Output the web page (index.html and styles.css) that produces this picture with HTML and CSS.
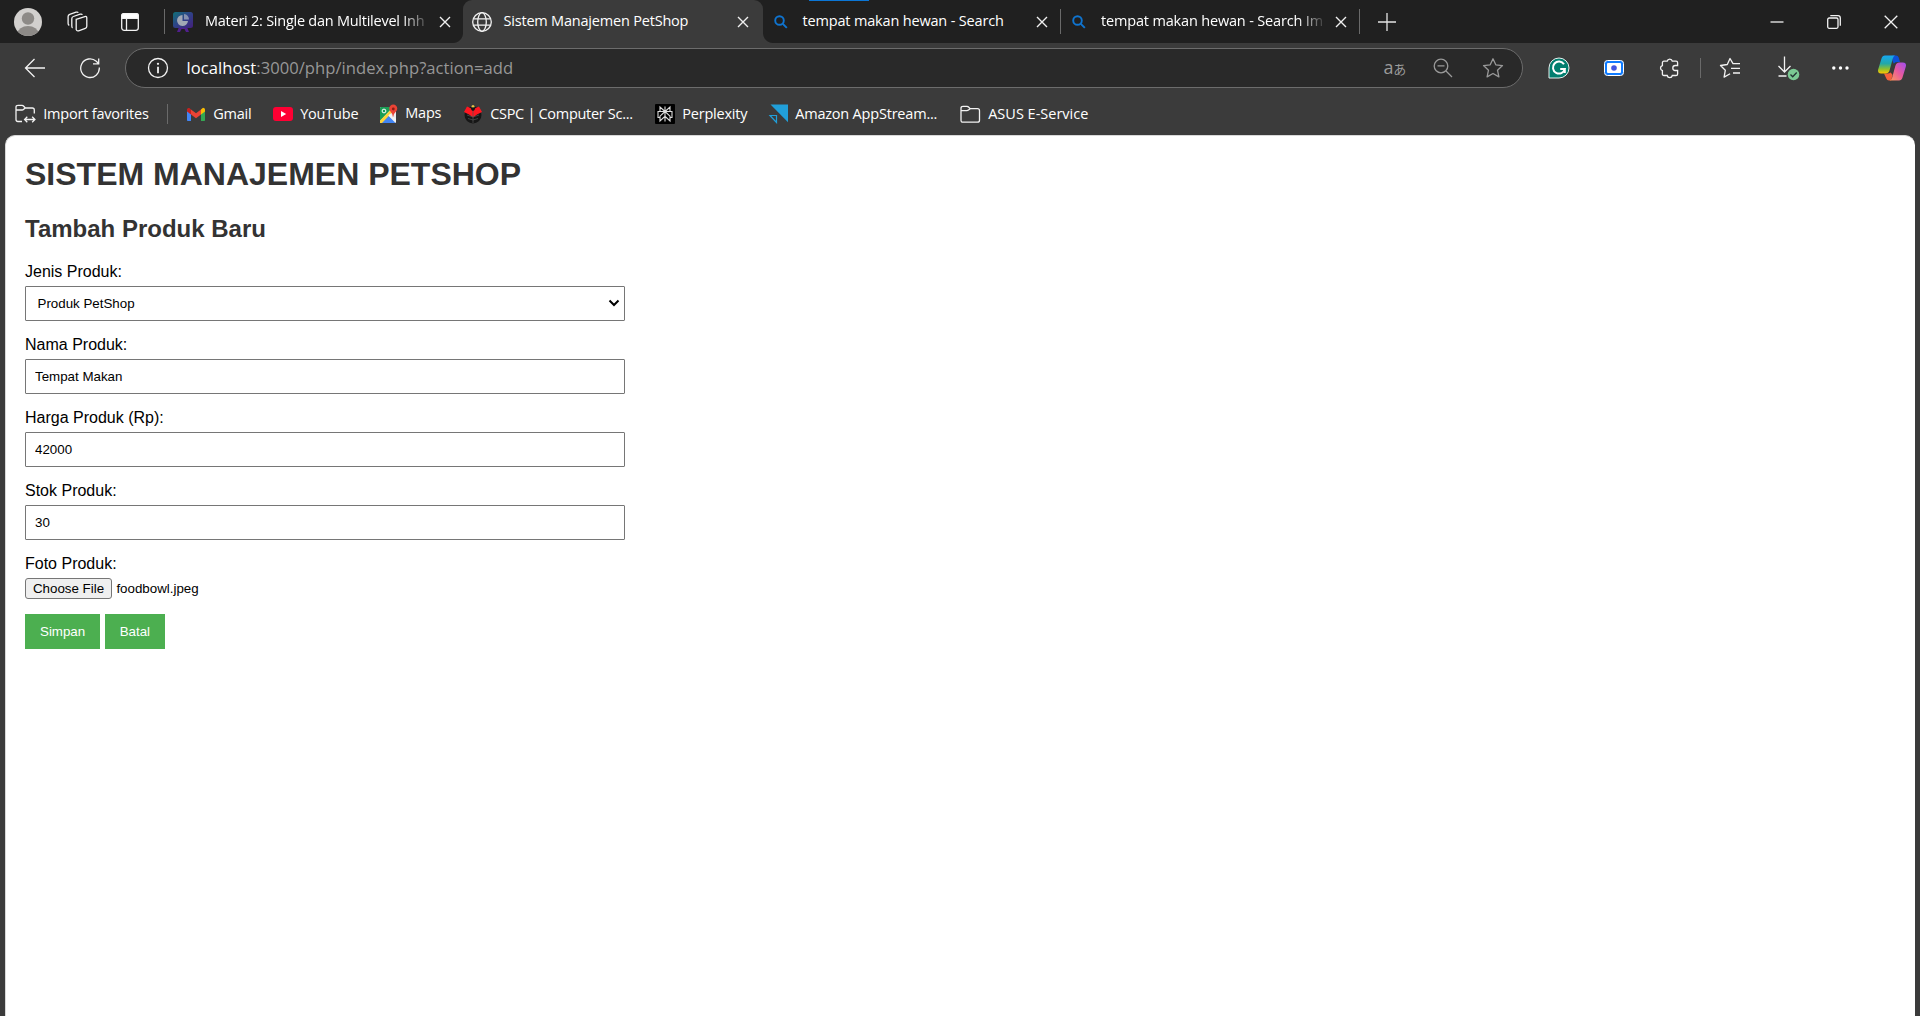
FILE: index.html
```html
<!DOCTYPE html>
<html lang="id">
<head>
<meta charset="utf-8">
<title>Sistem Manajemen PetShop</title>
<link rel="stylesheet" href="styles.css">
</head>
<body>
<div class="browser">
  <header class="tabstrip">
    <svg class="avatar" width="28" height="28" viewBox="0 0 28 28"><defs><clipPath id="av"><circle cx="14" cy="14" r="14"/></clipPath></defs><g clip-path="url(#av)"><rect width="28" height="28" fill="#d2d0ce"/><circle cx="14" cy="10.5" r="6.2" fill="#8d8a87"/><ellipse cx="14" cy="25.5" rx="10.5" ry="7.5" fill="#8d8a87"/></g></svg>
    <svg class="line workspaces" width="24" height="24" viewBox="0 0 24 24"><path d="M10.2 9.3 18.8 6.6q2-.6 2 1.3v8.3q0 1.6-1.5 2.1l-6.700 2.500q-1.800.6-2.400-1.200Z"/><path d="M6.600 17.800q-.8-.4-.8-1.700V8.800q0-1.800 1.600-2.300l6.800-2.300q1.700-.5 2.100.7M3.300 15.400q-1.200-.6-1.200-2V6.600q0-1.700 1.600-2.300l6.400-2.100q1.600-.5 2.200.5"/></svg>
    <svg class="line panel" width="20" height="20" viewBox="0 0 20 20"><rect x="1.700" y="1.700" width="16.600" height="16.600" rx="2.500"/><path d="M1.700 3.500q0-1.800 1.800-1.800h13q1.800 0 1.800 1.800V6.300H1.700Z" fill="#fff"/><path d="M6.500 6v12"/></svg>
    <i class="divider"></i>
    <div class="tab tab-first">
      <svg class="fav" width="22" height="22" viewBox="0 0 22 22"><defs><linearGradient id="pg" x1="0" y1="0" x2="1" y2="1"><stop offset="0" stop-color="#0e7f86"/><stop offset=".5" stop-color="#33489b"/><stop offset="1" stop-color="#4a1f8c"/></linearGradient></defs><path d="M7 16 5 21h3l1.500-3h3l1.500 3h3l-2-5Z" fill="#5a1fa0"/><rect x="1" y="1" width="20" height="16" rx="2.500" fill="url(#pg)"/><path d="M10.500 4A5.500 5.500 0 1 0 16 10h-5.500Z" fill="#b9c0cf"/><path d="M12 3a5.500 5.500 0 0 1 5 5.500h-5Z" fill="#97a5c8"/></svg>
      <span class="tab-title fade">Materi 2: Single dan Multilevel Inh</span>
      <svg class="close" width="12" height="12" viewBox="0 0 12 12"><path d="m1 1 10 10M11 1 1 11"/></svg>
    </div>
    <div class="tab tab-active">
      <svg class="fav line" width="22" height="22" viewBox="0 0 22 22"><circle cx="11" cy="11" r="9.300"/><ellipse cx="11" cy="11" rx="4.300" ry="9.300"/><path d="M2.500 7.800h17M2.500 14.200h17"/></svg>
      <span class="tab-title">Sistem Manajemen PetShop</span>
      <svg class="close" width="12" height="12" viewBox="0 0 12 12"><path d="m1 1 10 10M11 1 1 11"/></svg>
    </div>
    <div class="tab tab-search">
      <b class="group-line"></b>
      <svg class="fav mag" width="14" height="14" viewBox="0 0 14 14"><circle cx="5.500" cy="5.500" r="4.300"/><path d="m8.800 8.800 4 4"/></svg>
      <span class="tab-title">tempat makan hewan - Search</span>
      <svg class="close" width="12" height="12" viewBox="0 0 12 12"><path d="m1 1 10 10M11 1 1 11"/></svg>
    </div>
    <i class="divider"></i>
    <div class="tab tab-search tab-last">
      <svg class="fav mag" width="14" height="14" viewBox="0 0 14 14"><circle cx="5.500" cy="5.500" r="4.300"/><path d="m8.800 8.800 4 4"/></svg>
      <span class="tab-title fade">tempat makan hewan - Search Im</span>
      <svg class="close" width="12" height="12" viewBox="0 0 12 12"><path d="m1 1 10 10M11 1 1 11"/></svg>
    </div>
    <i class="divider"></i>
    <svg class="newtab" width="18" height="18" viewBox="0 0 18 18"><path d="M9 0v18M0 9h18"/></svg>
    <div class="window">
      <svg class="line" width="14" height="14" viewBox="0 0 14 14"><path d="M.5 7h13"/></svg>
      <svg class="line" width="14" height="14" viewBox="0 0 14 14"><rect x=".7" y="3" width="10.300" height="10.300" rx="1.500"/><path d="M3.300.7h7.700q2.300 0 2.300 2.300v7.700"/></svg>
      <svg class="line" width="14" height="14" viewBox="0 0 14 14"><path d="m.7.700 12.600 12.600M13.300.700.7 13.300"/></svg>
    </div>
  </header>

  <nav class="toolbar">
    <svg class="line" width="22" height="22" viewBox="0 0 22 22"><path d="M21 11H1.500M10.500 2l-9 9 9 9"/></svg>
    <svg class="line" width="22" height="22" viewBox="0 0 22 22"><path d="M20.300 10.500a9.300 9.300 0 1 1-3-6.200L19.500 6.500M19.700 1.500V6.800H14"/></svg>
    <div class="address">
      <svg class="line info" width="22" height="22" viewBox="0 0 22 22"><circle cx="11" cy="11" r="9.500"/><path d="M11 9.800v6.400" stroke-width="1.800"/><circle cx="11" cy="6.800" r=".5"/></svg>
      <span class="url"><span class="host">localhost</span>:3000/php/index.php?action=add</span>
      <span class="translate"><span>a</span><span class="kana">あ</span></span>
      <svg class="dim zoomout" width="20" height="20" viewBox="0 0 20 20"><circle cx="8" cy="8" r="6.800"/><path d="m13 13 6 6M4.500 7.800h7"/></svg>
      <svg class="dim star" width="22" height="22" viewBox="0 0 22 22"><path d="m11 1.800 2.800 6 6.700.8-5 4.600 1.400 6.700-5.900-3.400-5.900 3.400 1.400-6.700-5-4.600 6.700-.8Z" stroke-linejoin="round"/></svg>
    </div>
    <svg class="grammarly" width="22" height="22" viewBox="0 0 22 22"><path d="M1 21V11A10 10 0 1 1 11 21Z" fill="#027e6f" stroke="#e6f2f0"/><path d="M16 7.300A6 6 0 1 0 16.800 12h-4.600M16.800 12v4" fill="none" stroke="#fff" stroke-width="2"/></svg>
    <svg class="recorder" width="22" height="22" viewBox="0 0 22 22"><rect x="1.500" y="3.500" width="19" height="15" rx="3" fill="#0f7bff" stroke="#fff"/><rect x="4" y="6" width="14" height="10" rx="1" fill="#fff"/><circle cx="11" cy="11" r="2.800" fill="#4356e0"/></svg>
    <svg class="line puzzle" width="22" height="22" viewBox="0 0 22 22"><path d="M6 4.200h3.200a2.600 2.600 0 0 1 5.100 0h3.700q1.600 0 1.600 1.600v2.700h-2.300a2.500 2.500 0 0 0 0 5h2.300v3.400q0 1.600-1.600 1.600h-3.700a2.600 2.600 0 0 1-5.100 0H6q-1.600 0-1.600-1.600v-3.400a2.600 2.600 0 0 1 0-5V5.800q0-1.600 1.600-1.600Z"/></svg>
    <i class="divider"></i>
    <svg class="line" width="22" height="22" viewBox="0 0 22 22"><path d="M21 6.600H14L11 1.500 8.300 7.500 1.500 8.500l4.800 4.800-1.200 6.800 6-3.300M12 11.300h9M14 16h7" stroke-linejoin="round"/></svg>
    <svg class="download" width="26" height="26" viewBox="0 0 26 26"><path class="line" d="M8.500 1.500v15M2.500 11l6 6 6-6M2.500 21h8"/><circle cx="17.500" cy="19.500" r="5.800" fill="#7bc993"/><path d="m14.500 19.500 2.200 2.200 4-4.200" fill="none" stroke="#233" stroke-width="1.300"/></svg>
    <svg class="dots" width="18" height="6" viewBox="0 0 18 6"><circle cx="1.800" cy="3" r="1.700"/><circle cx="8.500" cy="3" r="1.700"/><circle cx="15" cy="3" r="1.700"/></svg>
    <svg class="copilot" width="28" height="26" viewBox="0 0 28 26"><defs><linearGradient id="c1" x1="0" y1="0" x2="0" y2="1"><stop offset="0" stop-color="#16a7f2"/><stop offset=".45" stop-color="#22a8a8"/><stop offset=".75" stop-color="#8fc02d"/><stop offset="1" stop-color="#ffc400"/></linearGradient><linearGradient id="c2" x1="1" y1="0" x2="0" y2="1"><stop offset="0" stop-color="#a04cf0"/><stop offset=".5" stop-color="#e85a9e"/><stop offset="1" stop-color="#ff9a55"/></linearGradient></defs><path d="M14.500.5h3.500Q20 .5 20.700 2.500l1.300 4.500H19q-2 0-3 2L14.500 6Z" fill="#0d50d8"/><path d="M6 18.500h4q2.500 0 3.500-2l1 4-1.500 5H11q-2 0-2.700-2Z" fill="#f4603c"/><path d="M7 .5h10Q15.500 1 14.800 3.500L11.500 15.500q-.9 3-4 3H3q-4 0-2.700-4.500L3.500 3.500Q4.400.5 7 .5Z" fill="url(#c1)"/><path d="M21 25.500H11.500q2-.5 2.700-3L17.300 11q.9-3.500 4-3.500h3.700q4 0 2.700 4.500L24.500 22.500Q23.600 25.500 21 25.500Z" fill="url(#c2)"/><path d="M16.200 8.500Q17 7.500 18 7.500L14.200 19l-1.400-1Z" fill="#3b3b3b"/></svg>
  </nav>

  <nav class="bookmarks">
    <a class="mark"><svg class="line" width="21" height="20" viewBox="0 0 21 20"><path d="M19.300 9.500V6q0-2-2-2h-7L8.500 2Q8 1.300 7 1.300H3Q1 1.300 1 3.300V15.500q0 2 2 2H7M1 6H7q1 0 1.700-.7L10.300 4M10 15.500h9.500M12.300 12.800 9.600 15.500l2.700 2.700M17.200 12.800l2.700 2.700-2.700 2.700"/></svg><span>Import favorites</span></a>
    <i class="divider"></i>
    <a class="mark"><svg width="20" height="20" viewBox="0 0 20 20"><path d="M1 5v11.200q0 .8.800.8H5V8Z" fill="#4285f4"/><path d="M19 5v11.200q0 .8-.8.800H15V8Z" fill="#34a853"/><path d="M15 5.500 17 3.800q2 0 2 2V7.500L15 10.500Z" fill="#fbbc04"/><path d="M5 5.500 10 9.200 15 5.500v5L10 14.200 5 10.500Z" fill="#ea4335"/><path d="M1 5.500q0-2 2.300-1.500L5 5.500v5L1 7.500Z" fill="#c5221f"/></svg><span>Gmail</span></a>
    <a class="mark"><svg width="20" height="20" viewBox="0 0 20 20"><rect y="3" width="20" height="14" rx="3" fill="#ff0033"/><path d="m8 7 5.200 3L8 13Z" fill="#fff"/></svg><span>YouTube</span></a>
    <a class="mark maps"><svg width="20" height="20" viewBox="0 0 20 20"><rect x="2" y="3" width="16" height="16" rx="1" fill="#e8eaed"/><path d="M2 4q0-1 1-1h12L2 17Z" fill="#1a9d55"/><path d="m3 19 7.300-7.500L17.500 19Z" fill="#4285f4"/><path d="M2 16.500 14 4.500l2 2L4 19H2Z" fill="#fdd337"/><path d="m10.300 11.500 2-2L18 15v3.500Z" fill="#f1f3f4"/><circle cx="6" cy="7" r="1.900" fill="none" stroke="#fff"/><path d="M15 13.500Q14.700 9.500 12.500 7.500A4 4 0 1 1 18 7.500Q15.500 9.500 15 13.500Z" fill="#ea4335"/><circle cx="15.300" cy="5" r="1.400" fill="#8c1c14"/></svg><span>Maps</span></a>
    <a class="mark"><svg width="20" height="20" viewBox="0 0 20 20"><circle cx="10" cy="11" r="8.500" fill="#161616"/><path d="M1 8 4 2.500 7.500 4 10 7l2.500-3L16 2.500 19 8 14 10.500l-4 3-4-3Z" fill="#ff1620"/><path d="M10 6v13M10 13 4 11M10 13l6-2M10 16l-5-1.500M10 16l5-1.500" stroke="#555" stroke-width=".7"/><circle cx="10" cy="2.500" r="1.500" fill="#e8c547"/><circle cx="10" cy="5" r="1.800" fill="#161616"/></svg><span class="cspc">CSPC | Computer Sc...</span></a>
    <a class="mark"><svg width="20" height="20" viewBox="0 0 20 20"><rect width="20" height="20" rx="1" fill="#000"/><path d="M10 2.500v15M10 7.500 5 3v4.500h10V3L10 7.500l5 4.700V17l-5-4.700L5 17v-4.800l5-4.700M5 7.500H3v6h2M15 7.500h2v6h-2" fill="none" stroke="#ddd" stroke-width="1.100"/></svg><span>Perplexity</span></a>
    <a class="mark"><svg width="20" height="20" viewBox="0 0 20 20"><path d="M2.500.5H20v17.800Z" fill="#219fd9"/><path d="M2 11.500h6.500v7Z" fill="none" stroke="#219fd9" stroke-width="1.200"/></svg><span>Amazon AppStream...</span></a>
    <a class="mark"><svg class="line" width="21" height="20" viewBox="0 0 21 20"><path d="M1 4.300q0-2 2-2H7q1 0 1.500.7L10.200 4.700h7.300q2 0 2 2v9.500q0 2-2 2H3q-2 0-2-2ZM1 6.700H6.800q1 0 1.700-.6L10.200 4.700"/></svg><span class="asus">ASUS E-Service</span></a>
  </nav>

  <main class="page">
    <h1>SISTEM MANAJEMEN PETSHOP</h1>
    <h2>Tambah Produk Baru</h2>
    <form class="form">
      <div class="field"><label for="jenis">Jenis Produk:</label>
        <div class="select"><select id="jenis"><option>Produk PetShop</option></select><svg class="chevron" width="12" height="8" viewBox="0 0 12 8"><path d="m1.500 1.500 4.500 4.500 4.500-4.500"/></svg></div></div>
      <div class="field"><label for="nama">Nama Produk:</label>
        <input id="nama" type="text" value="Tempat Makan"></div>
      <div class="field"><label for="harga">Harga Produk (Rp):</label>
        <input id="harga" type="text" value="42000"></div>
      <div class="field"><label for="stok">Stok Produk:</label>
        <input id="stok" type="text" value="30"></div>
      <div class="field"><label>Foto Produk:</label>
        <div class="file"><button type="button" class="choose">Choose File</button><span>foodbowl.jpeg</span></div></div>
      <div class="actions"><button type="submit" class="btn">Simpan</button><a class="btn btn-cancel">Batal</a></div>
    </form>
  </main>
</div>
</body>
</html>
```
FILE: styles.css
```css
* { box-sizing: border-box; }
body { margin: 0; height: 1016px; overflow: hidden; background: #3b3b3b; }
svg { display: block; flex: none; }

.browser {
  display: flex;
  flex-direction: column;
  height: 1016px;
  font: 14.5px/20px "Open Sans", sans-serif;
  letter-spacing: -0.2px;
  color: #fff;
}
.line { fill: none; stroke: #f2f2f2; stroke-width: 1.3; }
.divider { width: 1px; height: 25px; background: #6a6a6a; flex: none; }

/* Tab strip */
.tabstrip { display: flex; align-items: center; height: 43px; padding-left: 14px; background: #202020; }
.avatar { margin-right: 24px; }
.workspaces { margin-right: 30px; }
.panel { margin-right: 24px; }
.tab { position: relative; display: flex; align-items: center; height: 43px; flex: none; }
.tab-first { width: 298px; padding-left: 7px; }
.tab-first .fav { margin-right: 11px; opacity: .85; }
.tab-first .tab-title { width: 223.5px; margin-right: 10px; letter-spacing: -0.25px; }
.tab-title { white-space: nowrap; width: 223px; margin-right: 10.5px; padding-bottom: 2px; }
.fade { -webkit-mask-image: linear-gradient(90deg, #000 197px, transparent 226px); mask-image: linear-gradient(90deg, #000 197px, transparent 226px); }
.close { fill: none; stroke: #f0f0f0; stroke-width: 1.4; }
.tab-active { width: 300px; padding-left: 8px; background: #3b3b3b; border-radius: 9px 9px 0 0; }
.tab-active .fav { margin-right: 10.500px; }
.tab-active::before, .tab-active::after { content: ""; position: absolute; bottom: 0; width: 10px; height: 10px; }
.tab-active::before { left: -10px; background: radial-gradient(circle at 0 0, #202020 9.5px, #3b3b3b 10.5px); }
.tab-active::after { right: -10px; background: radial-gradient(circle at 100% 0, #202020 9.5px, #3b3b3b 10.5px); }
.tab-search { width: 297px; padding-left: 10.5px; letter-spacing: -0.17px; }
.tab-search .fav { margin-right: 15px; }
.tab-last { width: 298px; padding-left: 11px; }
.mag { fill: none; stroke: #0f74d0; stroke-width: 1.9; }
.group-line { position: absolute; top: 0; left: 46px; width: 60px; height: 1px; background: #0b76d6; }
.newtab { margin-left: 18px; fill: none; stroke: #e4e4e4; stroke-width: 1.3; }
.window { display: flex; gap: 43px; margin-left: auto; padding-right: 22px; }

/* Address row */
.toolbar {
  display: grid;
  grid-template-columns: 55px 46px 1423px 55px 55px 42px 19px 57px 56px 46px 1fr;
  align-items: center;
  height: 50px;
  padding-left: 24px;
}
.toolbar .divider { height: 20px; }
.address {
  display: flex;
  align-items: center;
  width: 1398px;
  height: 40px;
  padding: 0 18px 0 21px;
  background: #292929;
  border: 1px solid #6c6c6c;
  border-radius: 20px;
}
.info { margin-right: 17.5px; }
.url { font-size: 16.6px; color: #979797; letter-spacing: 0.03px; }
.host { color: #fff; }
.translate { margin-left: auto; display: flex; align-items: baseline; font-size: 18px; color: #9a9a9a; margin-right: 28px; }
.kana { font: 13px/20px "Noto Sans CJK JP", sans-serif; margin-right: -1px; }
.dim { fill: none; stroke: #999; stroke-width: 1.3; }
.zoomout { margin-right: 29px; }
.dots { fill: #fff; }

/* Favourites row */
.bookmarks {
  display: grid;
  grid-template-columns: 152px 19px 87px 105px 85px 192px 113px 192px 1fr;
  align-items: center;
  height: 42px;
  padding: 0 0 1px 15px;
}
.bookmarks .divider { height: 20px; }
.mark { display: flex; align-items: center; gap: 7.2px; white-space: nowrap; }
.mark span { padding-top: 1px; }
.maps span { padding: 0 0 1px; }
.cspc { letter-spacing: -0.3px; }
.asus { letter-spacing: 0; }

/* Page content */
.page {
  flex: 1;
  width: 1910px;
  margin-left: 5px;
  padding: 0 20px 0 19px;
  background: #fff;
  border: solid #d8d8d8;
  border-width: 1px 0 0 1px;
  border-radius: 10px 10px 0 0;
  font: 16px/normal "Liberation Sans", Arial, sans-serif;
  letter-spacing: 0;
  color: #000;
}
h1, h2 { color: #333; }
h1 { font-size: 32px; margin: 20px 0 22px; }
h2 { font-size: 24px; margin: 20px 0; }
.field { width: 600px; margin-bottom: 15px; }
label { display: block; height: 18px; margin-bottom: 5px; }
input, select {
  display: block;
  width: 600px;
  height: 35px;
  padding: 8px 9px;
  font: 13.333px "Liberation Sans", Arial, sans-serif;
  color: #000;
  background: #fff;
  border: 1px solid #767676;
  border-radius: 1px;
}
.select { position: relative; }
select { appearance: none; padding: 8px 11.5px; }
.chevron { position: absolute; right: 5px; top: 13px; fill: none; stroke: #000; stroke-width: 2; }
.file { display: flex; align-items: center; gap: 4.4px; height: 21px; font-size: 13.333px; }
.choose {
  width: 87px;
  height: 21px;
  padding: 0;
  font: 13.333px "Liberation Sans", Arial, sans-serif;
  color: #000;
  background: #efefef;
  border: 1px solid #767676;
  border-radius: 3px;
}
.actions { display: flex; gap: 5px; }
.btn {
  height: 35px;
  padding: 10px 15px;
  font: 13.333px/15px "Liberation Sans", Arial, sans-serif;
  color: #fff;
  background: #4caf50;
  border: 0;
}
.btn-cancel { width: 60px; padding: 10px 14.5px; }
```
